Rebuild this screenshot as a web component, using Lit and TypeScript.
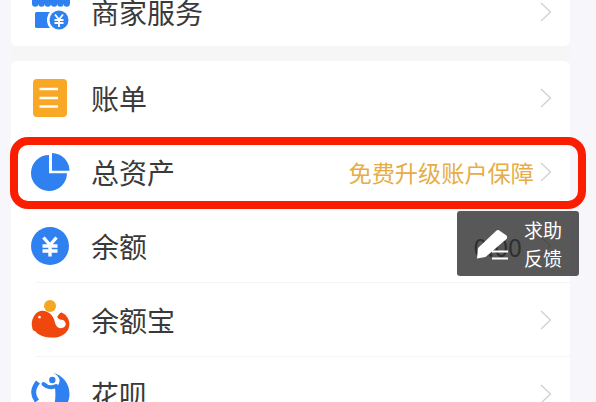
import { LitElement, html, css, svg } from 'lit';
import { customElement } from 'lit/decorators.js';

const BLUE = '#2f80f0';

const icons = {
  store: svg`
    <rect x="5" y="21" width="28" height="16" rx="1.5" fill=${BLUE}/>
    <rect x="2" y="3" width="38" height="10" fill=${BLUE}/>
    <circle cx="5.2" cy="12.5" r="3.2" fill=${BLUE}/>
    <circle cx="11.5" cy="12.5" r="3.2" fill=${BLUE}/>
    <circle cx="17.8" cy="12.5" r="3.2" fill=${BLUE}/>
    <circle cx="24.1" cy="12.5" r="3.2" fill=${BLUE}/>
    <circle cx="30.4" cy="12.5" r="3.2" fill=${BLUE}/>
    <circle cx="36.7" cy="12.5" r="3.2" fill=${BLUE}/>
    <circle cx="29" cy="29" r="12" fill="#fff"/>
    <circle cx="29" cy="29" r="9.5" fill=${BLUE}/>
    <path fill="none" stroke="#fff" stroke-width="1.8" d="M25 23.500l4 5 4-5M24.500 29h9M24.500 32h9M29 28.500V36"/>`,
  bill: svg`
    <rect x="3" y="2" width="34" height="38" rx="4" fill="#f9a825"/>
    <path fill="none" stroke="#fff" stroke-width="2.6" d="M9.500 12H28M9.500 21H28M9.500 29.500H28"/>`,
  pie: svg`
    <path fill=${BLUE} d="M19 4a18 18 0 1 0 18 18.300H19z"/>
    <path fill=${BLUE} d="M22 2a18 18 0 0 1 17.500 17.700H22z"/>`,
  yen: svg`
    <circle cx="20" cy="21" r="19" fill=${BLUE}/>
    <path fill="none" stroke="#fff" stroke-width="3.4" d="M13.500 12.500L20 20l6.500-7.500M12.500 21h15M12.500 26h15M20 20v11.500"/>`,
  whale: svg`
    <circle cx="20" cy="7" r="6" fill="#f5a623"/>
    <g transform="translate(-1 -1.300) scale(1.05)">
      <path fill="#f0470f" d="M3 28C2 24 3 21 4 19 6 15 9 12.500 13 12.500 18 12.500 22 16 24 21 25 26 27 29 30 29 33 29 35 27 35 25 35 23 33 21 31 21 29 21 27 20 27 18 28 16 30 14 31 14 36 16 38.500 21 38.500 25 38.500 33 31 38 23 38 15 38 9 36 6 32 4 32 3 30 3 28z"/>
      <circle cx="10" cy="18.500" r="1.2" fill="#fff"/>
    </g>`,
  flower: svg`
    <path fill="none" stroke=${BLUE} stroke-width="5" d="M8 9C3 15 2 22 7 28"/>
    <path fill=${BLUE} d="M23 0C33 2 39.500 11 39.500 21 39.500 32 31 40 22 40 25 33 26 24 25 15 28 13 30 10 29.500 6 28 3 26 1 23 0z"/>
    <circle cx="22.300" cy="7" r="3.2" fill=${BLUE}/>
    <path fill="none" stroke=${BLUE} stroke-width="4" stroke-linecap="round" d="M13.500 11C17 14.500 22 15 26 13"/>`,
};

const chevron = html`<svg class="chevron" viewBox="0 0 12 20"><path d="M1 1l9.500 9L1 19"/></svg>`;

@customElement('app-root')
export class AppRoot extends LitElement {
  static styles = css`
    :host {
      display: block;
      position: relative;
      width: 596px;
      height: 402px;
      overflow: hidden;
      background: #f6f6fb;
      font-family: "Noto Sans CJK SC", "Liberation Sans", sans-serif;
    }
    .card {
      width: 559px;
      margin-left: 11px;
      background: #fff;
      border-radius: 6px;
    }
    .card--top {
      margin-top: -25px;
      height: 71px;
      overflow: hidden;
    }
    .gap {
      width: 559px;
      height: 15px;
      margin-left: 11px;
      background: #f6f6f6;
    }
    .row {
      display: flex;
      align-items: center;
      height: 74px;
      padding: 0 18px 0 19px;
      box-sizing: border-box;
      gap: 19px;
      position: relative;
    }
    .row--line::before {
      content: '';
      position: absolute;
      left: 25px;
      right: 0;
      top: -1px;
      height: 1px;
      background: #f4f4f4;
    }
    .icon {
      width: 42px;
      height: 42px;
      flex: none;
    }
    .label {
      flex: 1;
      font-size: 28px;
      color: #3a3a3a;
      line-height: 40px;
      margin-top: -1px;
    }
    .hint {
      font-size: 23.2px;
      color: #e6ad47;
    }
    .value {
      font-size: 25px;
      color: #333;
      margin-right: 12px;
    }
    .chevron {
      width: 12px;
      height: 20px;
      margin-left: -13px;
      flex: none;
    }
    .chevron path {
      fill: none;
      stroke: #d2d2d2;
      stroke-width: 1.4;
    }
    .highlight {
      position: absolute;
      left: 10px;
      top: 137px;
      width: 576px;
      height: 72px;
      box-sizing: border-box;
      border: 8px solid #fb1d00;
      border-radius: 18px;
    }
    .feedback {
      position: absolute;
      left: 457px;
      top: 211px;
      width: 122px;
      height: 65px;
      display: flex;
      align-items: center;
      gap: 14px;
      padding-left: 19px;
      box-sizing: border-box;
      border-radius: 3px;
      background: rgba(46, 46, 48, 0.8);
      color: #fff;
      font-size: 19px;
      line-height: 28px;
    }
    .feedback svg {
      width: 34px;
      height: 34px;
      flex: none;
    }
  `;

  private row(icon: unknown, label: string, line = false, extra: unknown = null) {
    return html`
      <div class="row ${line ? 'row--line' : ''}">
        <svg class="icon" viewBox="0 0 42 42">${icon}</svg>
        <span class="label">${label}</span>
        ${extra}
        ${chevron}
      </div>
    `;
  }

  render() {
    return html`
      <div class="card card--top">${this.row(icons.store, '商家服务')}</div>
      <div class="gap"></div>
      <div class="card">
        ${this.row(icons.bill, '账单')}
        ${this.row(icons.pie, '总资产', false, html`<span class="hint">免费升级账户保障</span>`)}
        ${this.row(icons.yen, '余额', false, html`<span class="value">0.00</span>`)}
        ${this.row(icons.whale, '余额宝', true)}
        ${this.row(icons.flower, '花呗', true)}
      </div>
      <div class="highlight"></div>
      <div class="feedback">
        <svg viewBox="0 0 34 34">
          <path fill="#fff" d="M1 31.500L2 21 20 4a3 3 0 0 1 4 0l6.500 4.500a3 3 0 0 1 0 3.500L9.500 30z"/>
          <path fill="none" stroke="#fff" stroke-width="2" d="M16 24.500h16M16 31.500h16"/>
        </svg>
        <span>求助<br>反馈</span>
      </div>
    `;
  }
}
